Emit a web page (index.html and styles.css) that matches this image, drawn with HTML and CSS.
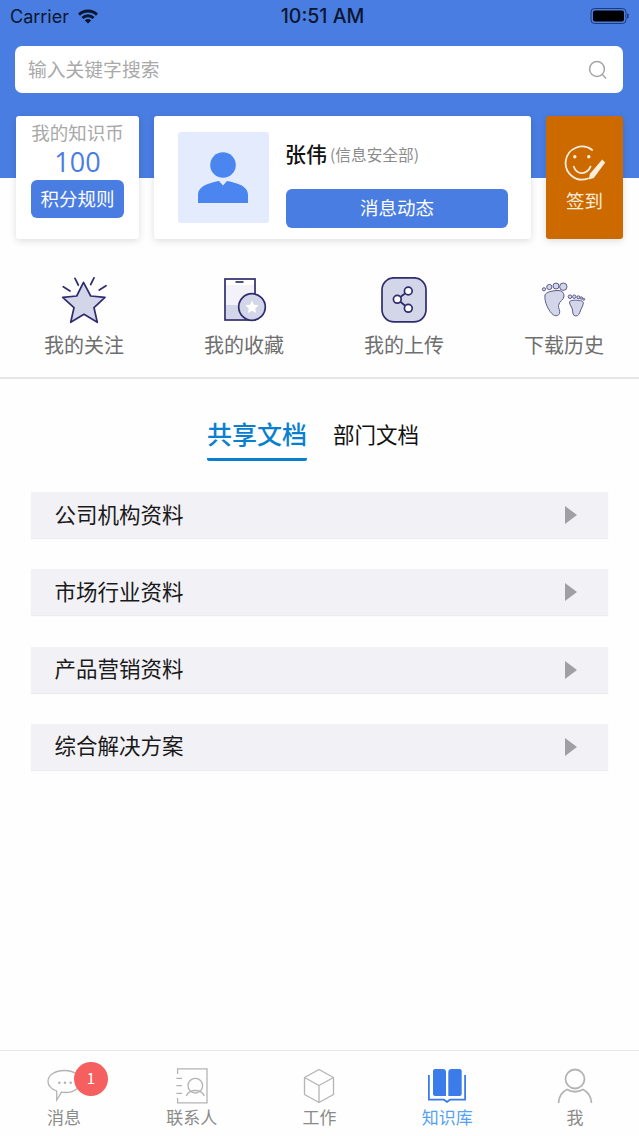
FILE: index.html
```html
<!DOCTYPE html>
<html lang="zh-CN">
<head>
  <meta charset="UTF-8">
  <title>知识库</title>
  <meta name="viewport" content="width=device-width, initial-scale=1">
  <link rel="stylesheet" href="styles.css">
</head>
<body>
  <div class="app">
    <div class="top">
      <div class="statusbar">
        <div class="status-left">
          <span>Carrier</span>
          <svg class="wifi" width="22" height="16" viewBox="0 0 22 16"><path d="M1 5.6a14.5 14.5 0 0 1 20 0l-2 2.1a11.6 11.6 0 0 0-16 0z M4.4 9a9.6 9.6 0 0 1 13.2 0l-2 2.1a6.8 6.8 0 0 0-9.2 0z M7.8 12.4a4.8 4.8 0 0 1 6.4 0L11 15.6z" fill="#0b1630"/></svg>
        </div>
        <div class="status-time">10:51 AM</div>
        <div class="status-right">
          <svg width="40" height="18" viewBox="0 0 40 18"><rect x="1" y="1.5" width="35" height="15" rx="3.5" fill="none" stroke="#1e3a78" stroke-width="1"/><rect x="3" y="3.5" width="31" height="11" rx="2" fill="#000"/><rect x="37" y="6.5" width="1.6" height="5" rx="0.8" fill="#1e3a78"/></svg>
        </div>
      </div>

      <div class="search">
        <span class="search-text">输入关键字搜索</span>
        <svg width="20" height="20" viewBox="0 0 20 20"><circle cx="9" cy="9" r="7.4" fill="none" stroke="#a5a5a5" stroke-width="1.5"/><path d="M14.4 14.6l3.6 3.8" stroke="#a5a5a5" stroke-width="1.5" fill="none"/></svg>
      </div>

      <div class="cards">
        <div class="card coin">
          <div class="coin-title">我的知识币</div>
          <div class="coin-num">100</div>
          <div class="coin-btn">积分规则</div>
        </div>
        <div class="card profile">
          <div class="avatar">
            <svg width="52" height="52" viewBox="0 0 52 52"><circle cx="26" cy="13" r="12.8" fill="#4a85f0"/><path d="M1 51V43c0-7 6-10 13-12 3-.9 6-1.6 8-2l4 4.5 4-4.5c2 .4 5 1.1 8 2 7 2 13 5 13 12v8z" fill="#4a85f0"/></svg>
          </div>
          <div class="profile-main">
            <div class="profile-name"><span class="name">张伟</span><span class="dept">(信息安全部)</span></div>
            <div class="profile-btn">消息动态</div>
          </div>
        </div>
        <div class="card sign">
          <svg width="42" height="38" viewBox="0 0 42 38" fill="none" stroke="#fbeedd" stroke-width="1.8" stroke-linecap="round">
            <path d="M28.2 5A16.5 16.5 0 1 0 24 33.5"/>
            <circle cx="10.8" cy="11.7" r="1.7" fill="#fbeedd" stroke="none"/>
            <circle cx="24.8" cy="11.7" r="1.7" fill="#fbeedd" stroke="none"/>
            <path d="M9.8 21.7c3 8.5 13 8.5 16.7 0"/>
            <path d="M24.8 34.5l1-5.5L38.2 14.500l3 3L29.800 33z" fill="#fbeedd" stroke="none"/>
          </svg>
          <div class="sign-text">签到</div>
        </div>
      </div>
    </div>

    <div class="shortcuts">
      <div class="shortcut">
        <svg width="48" height="48" viewBox="0 0 48 48" fill="none" stroke="#2f2d6e" stroke-width="1.7" stroke-linejoin="round" stroke-linecap="round">
          <path d="M23.5 5.3L30.7 19 45 20.3 34 30.7 37.3 45.3 24 37.3 10.7 45.3 14 30.7 2.7 20.3 16.7 19z" fill="#d3d6e8"/>
          <path d="M15 1.3l3.3 6.7M34 .8l-3.300 6.700M3.300 9.700l6.700 4.300M46 8.700l-6.700 4.300"/>
        </svg>
        <div class="shortcut-label">我的关注</div>
      </div>
      <div class="shortcut">
        <svg width="48" height="48" viewBox="0 0 48 48">
          <rect x="5" y="2" width="30" height="41" fill="#fff" stroke="#2f2d6e" stroke-width="1.7"/>
          <path d="M6 28h28v14H6z" fill="#d3d6e8"/>
          <path d="M6 8h28v20H6z" fill="#f2f2f8"/>
          <path d="M15.5 5h8" stroke="#2f2d6e" stroke-width="1.7"/>
          <circle cx="32" cy="30" r="13.3" fill="#d3d6e8" stroke="#2f2d6e" stroke-width="1.7"/>
          <path d="M32 23.5l2 4.2 4.6.6-3.400 3.100.9 4.600-4.100-2.300-4.100 2.300.9-4.600-3.400-3.100 4.600-.6z" fill="#fff"/>
        </svg>
        <div class="shortcut-label">我的收藏</div>
      </div>
      <div class="shortcut">
        <svg width="48" height="48" viewBox="0 0 48 48" fill="none" stroke="#2f2d6e" stroke-width="1.7">
          <rect x="2" y="0.8" width="44" height="44" rx="12" fill="#d3d6e8"/>
          <path d="M28.3 14l-11 8.3 11 9" stroke-width="1.8"/>
          <circle cx="28.3" cy="14" r="3.9" fill="#fff"/>
          <circle cx="17.3" cy="22.3" r="3.9" fill="#fff"/>
          <circle cx="28.3" cy="31.3" r="3.9" fill="#fff"/>
        </svg>
        <div class="shortcut-label">我的上传</div>
      </div>
      <div class="shortcut">
        <svg width="48" height="48" viewBox="0 0 48 48" fill="#d3d6e8" stroke="#5d5b8c" stroke-width="1">
          <path d="M5 18c1-3 8-4.500 13-4.500 4 0 6 2 6 5.500 0 4-5 5-5.500 9.500-.3 3 2 5 1 8-.7 2-4 3-6 1.500C9 35 4 25 5 18z"/>
          <circle cx="4" cy="12.3" r="1.6"/><circle cx="9.3" cy="10" r="2.6"/><circle cx="16" cy="9" r="3"/><circle cx="23.3" cy="9.7" r="3.7"/>
          <path d="M29.5 25c0-1.500 4-2 7-1.800 4 .2 7 .8 6.800 2.800-.2 3-2 5-3 8-.7 2.500-2 5-4.500 5-3 0-3-3.500-3.300-6-.3-3-3-5-3-8z"/>
          <circle cx="30" cy="19.7" r="1.8"/><circle cx="34.3" cy="19.7" r="1.7"/><circle cx="38.3" cy="20.3" r="1.5"/><circle cx="41.3" cy="21" r="1.2"/><circle cx="43.7" cy="22.3" r="1"/>
        </svg>
        <div class="shortcut-label">下载历史</div>
      </div>
    </div>

    <div class="tabs">
      <div class="tab tab-active">共享文档</div>
      <div class="tab">部门文档</div>
    </div>

    <div class="list">
      <div class="row"><span>公司机构资料</span><i class="arrow"></i></div>
      <div class="row"><span>市场行业资料</span><i class="arrow"></i></div>
      <div class="row"><span>产品营销资料</span><i class="arrow"></i></div>
      <div class="row"><span>综合解决方案</span><i class="arrow"></i></div>
    </div>

    <div class="tabbar">
      <div class="tabbar-item">
        <div class="tabbar-icon">
          <svg width="40" height="36" viewBox="0 0 40 36" fill="none" stroke="#b4b4b4" stroke-width="1.3">
            <path d="M20.5 2.5c9 0 16 4.500 16 11s-7 11-15 11c-1.500 0-3-.1-4-.4L12.700 32v-9C7.500 21 4 18 4 13.500c0-6.500 7-11 16.500-11z"/>
            <circle cx="15.3" cy="14.7" r="1.3" fill="#b4b4b4" stroke="none"/><circle cx="21" cy="14.7" r="1.3" fill="#b4b4b4" stroke="none"/><circle cx="26.7" cy="14.7" r="1.3" fill="#b4b4b4" stroke="none"/>
          </svg>
          <span class="badge">1</span>
        </div>
        <div class="tabbar-label">消息</div>
      </div>
      <div class="tabbar-item">
        <div class="tabbar-icon">
          <svg width="36" height="36" viewBox="0 0 36 36" fill="none" stroke="#b4b4b4" stroke-width="1.3">
            <path d="M3.6 6V.8H33v34H3.600V30"/>
            <path d="M2.3 10.3H8M2.3 17.7H8M2.3 25.300H8"/>
            <circle cx="21.3" cy="17.7" r="7.3"/>
            <path d="M12.3 28c1.500-3.500 5-5.500 9-5.500s7.500 2 9 5.500"/>
          </svg>
        </div>
        <div class="tabbar-label">联系人</div>
      </div>
      <div class="tabbar-item">
        <div class="tabbar-icon">
          <svg width="36" height="36" viewBox="0 0 36 36" fill="none" stroke="#b4b4b4" stroke-width="1.3" stroke-linejoin="round">
            <path d="M18 1.5l14.500 8v17l-14.500 8-14.500-8v-17z"/>
            <path d="M3.5 9.500l14.500 8 14.500-8M18 17.500v17"/>
          </svg>
        </div>
        <div class="tabbar-label">工作</div>
      </div>
      <div class="tabbar-item tabbar-active">
        <div class="tabbar-icon">
          <svg width="40" height="36" viewBox="0 0 40 36" fill="#3b7bea">
            <path d="M6 3c0-1.200 1-2 2-2h8c1.800 0 3 1.200 3 3v24H8c-1 0-2-.8-2-2z"/>
            <path d="M34.7 3c0-1.200-1-2-2-2h-8.400c-1.800 0-3 1.200-3 3v24h11.400c1 0 2-.8 2-2z"/>
            <path d="M1 7v25.500h15.500L20 35l3.500-2.500H39V7h-1.800v23.700H22.700L20 32.800l-2.700-2.100H2.800V7z"/>
          </svg>
        </div>
        <div class="tabbar-label">知识库</div>
      </div>
      <div class="tabbar-item">
        <div class="tabbar-icon">
          <svg width="36" height="36" viewBox="0 0 36 36" fill="none" stroke="#b4b4b4" stroke-width="1.8">
            <circle cx="18" cy="11" r="9.5"/>
            <path d="M1.5 35c.5-7 3-11 8.500-13.500 5 2.800 11 2.800 16 0C31.500 24 34 28 34.500 35"/>
          </svg>
        </div>
        <div class="tabbar-label">我</div>
      </div>
    </div>
  </div>
</body>
</html>
```

FILE: styles.css
```css
* {
  box-sizing: border-box;
}

body {
  margin: 0;
  padding: 0;
  background: #fff;
  font-family: "Noto Sans CJK SC", "Noto Sans", sans-serif;
}

.app {
  width: 639px;
  height: 1136px;
  display: flex;
  flex-direction: column;
  overflow: hidden;
  background: #fefefe;
}

.top {
  height: 240px;
  padding: 0 15px;
  background: linear-gradient(#4a7de2 178px, #fefefe 178px);
}

.statusbar {
  height: 46px;
  margin: 0 -5px;
  padding-bottom: 14px;
  display: flex;
  align-items: center;
  justify-content: space-between;
  color: #0b1630;
  font-family: Inter, Roboto, sans-serif;
}

.status-left {
  width: 130px;
  display: flex;
  align-items: center;
  gap: 8px;
  font-size: 18px;
}

.status-time {
  margin-left: 5px;
  font-size: 19.5px;
  font-weight: 500;
}

.status-right {
  width: 130px;
  margin-right: -1px;
  display: flex;
  justify-content: flex-end;
}

.search {
  height: 47px;
  margin-right: 1px;
  padding: 0 15px 0 13px;
  display: flex;
  align-items: center;
  justify-content: space-between;
  background: #fff;
  border-radius: 7px;
}

.search-text {
  margin-top: -2px;
  font-size: 18.8px;
  color: #a9a9a9;
}

.cards {
  height: 124px;
  margin-top: 23px;
  margin-left: 1px;
  display: flex;
  gap: 15px;
}

.card {
  height: 123px;
  background: #fff;
  border-radius: 3px;
  box-shadow: 0 2px 7px rgba(0, 0, 0, 0.13);
}

.coin {
  width: 123px;
  display: flex;
  flex-direction: column;
  align-items: center;
}

.coin-title {
  margin-top: 3px;
  height: 27px;
  line-height: 27px;
  font-size: 18.5px;
  color: #a8a8a8;
}

.coin-num {
  height: 32px;
  line-height: 32px;
  font-size: 27px;
  color: #4a7de2;
  font-family: "Open Sans", sans-serif;
}

.coin-btn {
  width: 93px;
  height: 38px;
  margin-top: 2px;
  line-height: 37px;
  text-align: center;
  font-size: 18.5px;
  color: #fff;
  background: #4a7de2;
  border-radius: 6px;
}

.profile {
  width: 377px;
  padding: 16px 23px 0 24px;
  display: flex;
  gap: 17px;
}

.avatar {
  width: 91px;
  height: 91px;
  padding: 20px 1px 0 0;
  display: flex;
  justify-content: center;
  background: #e3ebfc;
  border-radius: 3px;
}

.profile-main {
  flex: 1;
}

.profile-name {
  height: 41px;
  margin-left: -1px;
  display: flex;
  align-items: center;
}

.name {
  font-size: 21px;
  font-weight: 500;
  color: #111;
}

.dept {
  margin-top: 3px;
  margin-left: 3px;
  font-size: 15.7px;
  color: #8c8c8c;
}

.profile-btn {
  height: 39px;
  margin-top: 16px;
  line-height: 36px;
  text-align: center;
  font-size: 18.5px;
  color: #fff;
  background: #4a7de2;
  border-radius: 6px;
}

.sign {
  width: 77px;
  padding-top: 29px;
  display: flex;
  flex-direction: column;
  align-items: center;
  background: #cc6a00;
}

.sign-text {
  margin-top: 4px;
  font-size: 18.5px;
  line-height: 26px;
  color: #fbeedd;
}

.shortcuts {
  height: 139px;
  padding: 37px 0 0 4px;
  display: grid;
  grid-template-columns: repeat(4, 160px);
  border-bottom: 2px solid #e6e6e6;
}

.shortcut {
  display: flex;
  flex-direction: column;
  align-items: center;
}

.shortcut-label {
  margin-top: 5px;
  font-size: 20px;
  line-height: 30px;
  color: #6e6e6e;
}

.tabs {
  height: 82px;
  padding: 38px 13px 0 0;
  display: flex;
  justify-content: center;
  gap: 26px;
}

.tab {
  height: 44px;
  line-height: 33px;
  font-size: 21.5px;
  color: #111;
}

.tab-active {
  width: 100px;
  text-align: center;
  font-size: 25px;
  font-weight: 500;
  color: #0a7fd0;
  border-bottom: 3px solid #0a7fd0;
  border-radius: 0 0 2px 2px;
  white-space: nowrap;
}

.list {
  flex: 1;
  padding: 31px 31px 0;
  display: flex;
  flex-direction: column;
  gap: 31.33px;
}

.row {
  height: 46px;
  padding: 0 31px 0 23.5px;
  display: flex;
  align-items: center;
  justify-content: space-between;
  font-size: 21.5px;
  color: #1a1a1a;
  background: #f2f1f5;
  box-shadow: 0 1px 1px #ececec;
}

.row span {
  margin-top: -4px;
}

.arrow {
  width: 0;
  height: 0;
  border-left: 12px solid #a0a0a4;
  border-top: 9px solid transparent;
  border-bottom: 9px solid transparent;
}

.tabbar {
  height: 86px;
  padding-top: 17px;
  display: grid;
  grid-template-columns: repeat(5, 1fr);
  border-top: 1px solid #e8e8e8;
  background: #fefefe;
}

.tabbar-item {
  display: flex;
  flex-direction: column;
  align-items: center;
}

.tabbar-icon {
  position: relative;
  height: 36px;
}

.badge {
  position: absolute;
  top: -6px;
  left: 30px;
  width: 34px;
  height: 34px;
  line-height: 32px;
  text-align: center;
  font-size: 15px;
  color: #fff;
  background: #f55f5f;
  border-radius: 50%;
}

.tabbar-label {
  margin-top: 1px;
  font-size: 17px;
  line-height: 23px;
  color: #8a8a8a;
}

.tabbar-active .tabbar-label {
  color: #55a3f0;
}
```
